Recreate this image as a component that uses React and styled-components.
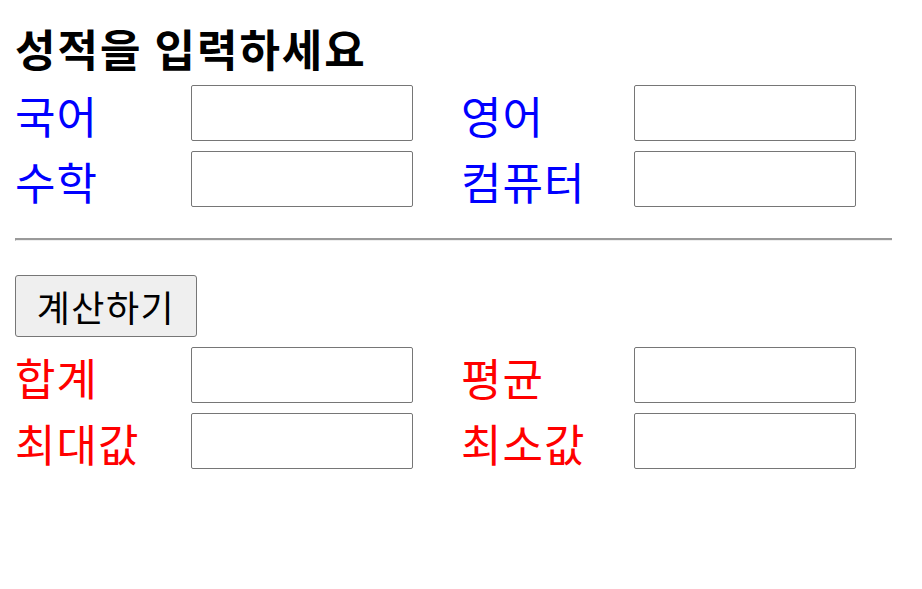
import styled, { createGlobalStyle } from "styled-components";

const GlobalStyle = createGlobalStyle`
  html, body {
    margin: 0;
    padding: 0;
    background: #ffffff;
  }
  body {
    font-family: "Noto Sans CJK KR", "Noto Sans", sans-serif;
  }
`;

const Page = styled.div`
  padding: 0 15px;
  width: 922px;
  box-sizing: border-box;
`;

const Title = styled.h1`
  margin: 26px 0 0 0;
  height: 44px;
  font-size: 44px;
  line-height: 44px;
  letter-spacing: 2px;
  font-weight: 700;
  color: #000000;
`;

const ScoreGrid = styled.div`
  display: grid;
  grid-template-columns: 176px 270px 173px 222px;
  grid-auto-rows: 56px;
  row-gap: 10px;
  margin-top: ${(props) => props.$top}px;
`;

const Label = styled.label`
  display: flex;
  align-items: center;
  padding-top: 4px;
  font-size: 44px;
  line-height: 1;
  letter-spacing: 1px;
  color: ${(props) => props.$color};
  white-space: nowrap;
`;

const Field = styled.input`
  box-sizing: border-box;
  width: 222px;
  height: 56px;
  margin: 0;
  border: 1px solid #767676;
  border-radius: 2px;
  background: #ffffff;
  font-size: 24px;
  padding: 0 6px;
  font-family: inherit;
`;

const Divider = styled.hr`
  box-sizing: border-box;
  width: 877px;
  height: 3px;
  margin: 31px 0 0 0;
  border: none;
  border-top: 2px solid #9a9a9a;
  border-left: 1px solid #9a9a9a;
  border-bottom: 1px solid #eeeeee;
`;

const CalcButton = styled.button`
  box-sizing: border-box;
  display: block;
  width: 182px;
  height: 62px;
  margin-top: 34px;
  padding: 0;
  border: 1px solid #767676;
  border-radius: 3px;
  background: #efefef;
  color: #000000;
  font-family: inherit;
  font-size: 36px;
  letter-spacing: 1.5px;
  line-height: 1;
`;

const inputs = [
  ["국어", "영어"],
  ["수학", "컴퓨터"],
];

const results = [
  ["합계", "평균"],
  ["최대값", "최소값"],
];

const Rows = ({ rows, color, top }) => (
  <ScoreGrid $top={top}>
    {rows.map(([a, b]) => [
      <Label key={a + "l"} $color={color}>{a}</Label>,
      <div key={a + "i"}><Field type="text" /></div>,
      <Label key={b + "l"} $color={color}>{b}</Label>,
      <div key={b + "i"}><Field type="text" /></div>,
    ])}
  </ScoreGrid>
);

export default function App() {
  return (
    <Page>
      <GlobalStyle />
      <Title>성적을 입력하세요</Title>
      <Rows rows={inputs} color="#0000ff" top={15} />
      <Divider />
      <CalcButton>계산하기</CalcButton>
      <Rows rows={results} color="#ff0000" top={10} />
    </Page>
  );
}
